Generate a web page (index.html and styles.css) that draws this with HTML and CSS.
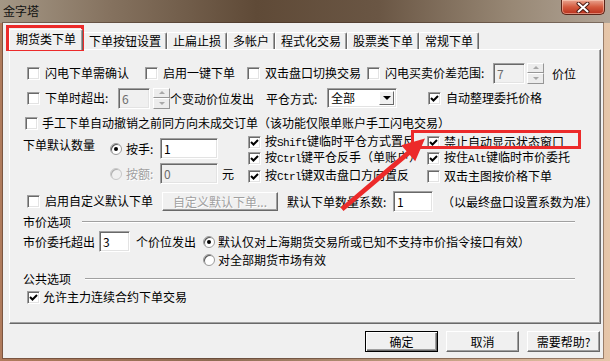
FILE: index.html
```html
<!DOCTYPE html>
<html lang="zh-CN">
<head>
    <meta charset="UTF-8">
    <title>金字塔</title>
    <link rel="stylesheet" href="styles.css">
</head>
<body>
<div class="window">
    <div class="titlebar">
        <span class="title">金字塔</span>
        <span class="close">
            <svg width="14" height="11" viewBox="0 0 14 11"><path d="M2.5 1.5 L11.5 9.5 M11.5 1.5 L2.5 9.5" stroke="#4a1a12" stroke-width="4" stroke-linecap="round"/><path d="M2.5 1.5 L11.5 9.5 M11.5 1.5 L2.5 9.5" stroke="#fff" stroke-width="2" stroke-linecap="round"/></svg>
        </span>
    </div>

    <div class="client">
        <div class="tabs">
            <span class="tab active">期货类下单</span>
            <span class="tab">下单按钮设置</span>
            <span class="tab">止扁止损</span>
            <span class="tab">多帐户</span>
            <span class="tab">程式化交易</span>
            <span class="tab">股票类下单</span>
            <span class="tab">常规下单</span>
        </div>

        <div class="panel">
            <div class="row r1">
                <label class="opt w118"><span class="cb"></span>闪电下单需确认</label>
                <label class="opt w102"><span class="cb"></span>启用一键下单</label>
                <label class="opt w120"><span class="cb"></span>双击盘口切换交易</label>
                <label class="opt w126"><span class="cb"></span>闪电买卖价差范围:</label>
                <span class="field off w32">7</span>
                <span class="spin sp-gap"><span class="up"></span><span class="dn"></span></span>
                <span class="unit">价位</span>
            </div>

            <div class="row r2">
                <label class="opt w91"><span class="cb"></span>下单时超出:</label>
                <span class="field off w32">6</span>
                <span class="spin sp-gap3"><span class="up"></span><span class="dn"></span></span>
                <span class="w96">个变动价位发出</span>
                <span class="w61">平仓方式:</span>
                <span class="select">
                    <span class="val">全部</span>
                    <span class="drop"></span>
                </span>
                <label class="opt ml31"><span class="cb"><svg class="tick" viewBox="0 0 9 9"><polyline points="1,4 3.5,6.5 8,2"/></svg></span>自动整理委托价格</label>
            </div>

            <div class="row r3">
                <label class="opt gap4"><span class="cb"></span>手工下单自动撤销之前同方向未成交订单（该功能仅限单账户手工闪电交易）</label>
            </div>

            <div class="qty">
                <div class="qty-label">下单默认数量</div>
                <div class="qty-radios">
                    <div class="qrow first">
                        <span class="rd on"></span>
                        <span class="qname">按手:</span>
                        <span class="field w58">1</span>
                    </div>
                    <div class="qrow second">
                        <span class="rd off"></span>
                        <span class="qname dim">按额:</span>
                        <span class="field off w58">0</span>
                        <span class="yuan">元</span>
                    </div>
                </div>
                <div class="checks mid">
                    <label class="opt c1"><span class="cb"><svg class="tick" viewBox="0 0 9 9"><polyline points="1,4 3.5,6.5 8,2"/></svg></span><span>按<span class="en">Shift</span>键临时平仓方式置反</span></label>
                    <label class="opt c2"><span class="cb"><svg class="tick" viewBox="0 0 9 9"><polyline points="1,4 3.5,6.5 8,2"/></svg></span><span>按<span class="en">Ctrl</span>键平仓反手（单账户）</span></label>
                    <label class="opt c3"><span class="cb"><svg class="tick" viewBox="0 0 9 9"><polyline points="1,4 3.5,6.5 8,2"/></svg></span><span>按<span class="en">Ctrl</span>键双击盘口方向置反</span></label>
                </div>
                <div class="checks right">
                    <label class="opt c1"><span class="cb"><svg class="tick" viewBox="0 0 9 9"><polyline points="1,4 3.5,6.5 8,2"/></svg></span>禁止自动显示状态窗口</label>
                    <label class="opt c2"><span class="cb"><svg class="tick" viewBox="0 0 9 9"><polyline points="1,4 3.5,6.5 8,2"/></svg></span><span>按住<span class="en">Alt</span>键临时市价委托</span></label>
                    <label class="opt c3"><span class="cb"></span>双击主图按价格下单</label>
                </div>
            </div>

            <div class="row r7">
                <label class="opt w135"><span class="cb"></span>启用自定义默认下单</label>
                <span class="btn disabled">自定义默认下单...</span>
                <span class="w106">默认下单数量系数:</span>
                <span class="field w40">1</span>
                <span class="note">（以最终盘口设置系数为准）</span>
            </div>

            <div class="grp g1">
                <span>市价选项</span>
                <span class="line"></span>
            </div>

            <div class="row r9">
                <span>市价委托超出</span>
                <span class="field w31">3</span>
                <span class="after">个价位发出</span>
                <span class="rd on"></span>
                <span class="rtext">默认仅对上海期货交易所或已知不支持市价指令接口有效）</span>
            </div>

            <div class="row r10">
                <span class="rd"></span>
                <span class="rtext">对全部期货市场有效</span>
            </div>

            <div class="grp g2">
                <span>公共选项</span>
                <span class="line"></span>
            </div>

            <div class="row r12">
                <label class="opt gap3"><span class="cb"><svg class="tick" viewBox="0 0 9 9"><polyline points="1,4 3.5,6.5 8,2"/></svg></span>允许主力连续合约下单交易</label>
            </div>
        </div>

        <div class="actions">
            <span class="btn default">确定</span>
            <span class="btn">取消</span>
            <span class="btn">需要帮助?</span>
        </div>
    </div>

    <!-- annotations drawn over the dialog -->
    <div class="mark mark-tab"></div>
    <div class="mark mark-opt"></div>
    <svg class="arrow" width="610" height="361" viewBox="0 0 610 361">
        <polygon points="340.5,207.5 406.6,151.3 401.2,145.2 425,138.5 415.2,161.2 409.8,155.1 343.5,211" fill="#ec2a2a"/>
    </svg>
</div>
</body>
</html>
```

FILE: styles.css
```css
* {
    box-sizing: border-box;
}
body {
    margin: 0;
    font-family: "Noto Sans CJK SC", "Noto Sans", sans-serif;
    font-size: 12px;
    color: #000;
}
.window {
    position: relative;
    width: 610px;
    height: 361px;
    overflow: hidden;
    background: linear-gradient(to right, #b07b5c 0%, #8f6c53 35%, #c9a487 75%, #e6c6a9 100%);
}
.titlebar {
    height: 23px;
    display: flex;
    align-items: flex-start;
    background: linear-gradient(to right, #a49785 0%, #85725f 18%, #5f4a37 42%, #6a5644 62%, #988875 84%, #b2a597 100%);
}
.title {
    padding: 4px 0 0 3px;
    line-height: 14px;
    color: #111;
}
.close {
    margin-left: auto;
    margin-right: 5px;
    width: 44px;
    height: 15px;
    display: flex;
    align-items: center;
    justify-content: center;
    border: 1px solid #5a2418;
    border-top: none;
    border-radius: 0 0 5px 5px;
    background: linear-gradient(#e9a48f, #d45a3e 50%, #b8301c);
    box-shadow: inset 0 0 0 1px rgba(255, 220, 200, 0.5);
}
.client {
    margin-left: 3px;
    width: 600px;
    height: 335px;
    padding-top: 6px;
    background: #f0f0f0;
    box-shadow: 0 0 0 1px rgba(60, 40, 30, 0.45);
}

/* tabs */
.tabs {
    display: flex;
    align-items: flex-end;
    height: 20px;
    margin-left: 6px;
}
.tab {
    height: 17px;
    padding: 0 5px;
    line-height: 15px;
    border: 1px solid #fff;
    border-right-color: #696969;
    border-bottom: none;
    border-radius: 2px 2px 0 0;
    box-shadow: inset -1px 0 #a0a0a0;
    white-space: nowrap;
}
.tab.active {
    position: relative;
    z-index: 1;
    height: 21px;
    margin-bottom: -1px;
    padding: 0 6px;
    line-height: 17px;
    background: #f0f0f0;
}
.panel {
    margin-left: 6px;
    width: 592px;
    height: 275px;
    padding-left: 13px;
    border: 1px solid;
    border-color: #fff #696969 #696969 #fff;
    box-shadow: inset -1px -1px #a0a0a0;
}

/* generic controls */
.row {
    display: flex;
    align-items: center;
    white-space: nowrap;
}
.opt {
    display: flex;
    align-items: center;
    gap: 5px;
    white-space: nowrap;
    line-height: 14px;
}
.gap4 {
    gap: 4px;
}
.gap3 {
    gap: 3px;
}
.cb {
    flex: none;
    width: 13px;
    height: 13px;
    display: flex;
    align-items: center;
    justify-content: center;
    background: #fff;
    border: 1px solid;
    border-color: #a0a0a0 #fff #fff #a0a0a0;
    box-shadow: inset 1px 1px #696969, inset -1px -1px #e3e3e3;
}
.tick {
    width: 9px;
    height: 9px;
    fill: none;
    stroke: #000;
    stroke-width: 2;
}
.rd {
    flex: none;
    width: 12px;
    height: 12px;
    border-radius: 50%;
    background: #fff;
    border: 1px solid #9a9a9a;
    box-shadow: inset 1px 1px #5a5a5a;
    display: flex;
    align-items: center;
    justify-content: center;
}
.rd.on::after {
    content: "";
    width: 4px;
    height: 4px;
    border-radius: 50%;
    background: #000;
}
.rd.off {
    background: #f0f0f0;
    border-color: #c8c8c8;
    box-shadow: inset 1px 1px #b0b0b0;
}
.field {
    flex: none;
    height: 21px;
    padding: 0 3px;
    line-height: 19px;
    background: #fff;
    border: 1px solid;
    border-color: #a0a0a0 #fff #fff #a0a0a0;
    box-shadow: inset 1px 1px #696969, inset -1px -1px #e3e3e3;
}
.field.off {
    background: #f0f0f0;
    color: #6d6d6d;
}
.spin {
    flex: none;
    width: 17px;
    height: 21px;
    display: flex;
    flex-direction: column;
}
.spin span {
    flex: 1;
    display: flex;
    align-items: center;
    justify-content: center;
    border: 1px solid;
    border-color: #fff #969696 #969696 #fff;
    background: #ececec;
}
.spin .up::before {
    content: "";
    border-left: 3px solid transparent;
    border-right: 3px solid transparent;
    border-bottom: 3px solid #a8a8a8;
}
.spin .dn::before {
    content: "";
    border-left: 3px solid transparent;
    border-right: 3px solid transparent;
    border-top: 3px solid #a8a8a8;
}
.select {
    flex: none;
    width: 70px;
    height: 20px;
    display: flex;
    padding: 2px;
    background: #fff;
    border: 1px solid;
    border-color: #a0a0a0 #fff #fff #a0a0a0;
    box-shadow: inset 1px 1px #696969, inset -1px -1px #e3e3e3;
}
.select .val {
    flex: 1;
    padding-left: 1px;
    line-height: 14px;
}
.select .drop {
    width: 15px;
    display: flex;
    align-items: center;
    justify-content: center;
    background: #f0f0f0;
    border: 1px solid;
    border-color: #fff #696969 #696969 #fff;
}
.select .drop::before {
    content: "";
    border-left: 4px solid transparent;
    border-right: 4px solid transparent;
    border-top: 4px solid #000;
}
.btn {
    flex: none;
    width: 73px;
    height: 21px;
    text-align: center;
    line-height: 19px;
    background: #f0f0f0;
    border: 1px solid;
    border-color: #fff #696969 #696969 #fff;
    box-shadow: inset -1px -1px #a0a0a0;
}
.btn.default {
    border: 1px solid #000;
    box-shadow: inset 1px 1px #fff, inset -1px -1px #696969, inset -2px -2px #a0a0a0;
}
.btn.disabled {
    width: 116px;
    height: 19px;
    line-height: 17px;
    color: #a0a0a0;
    text-shadow: 1px 1px #fff;
}
.en {
    font-family: "Liberation Mono", monospace;
    font-size: 11px;
    letter-spacing: -0.6px;
}
.dim {
    color: #a0a0a0;
    text-shadow: 1px 1px #fff;
}

/* widths for the fixed dialog grid */
.w31 { width: 31px; }
.w32 { width: 32px; }
.w40 { width: 40px; }
.w58 { width: 58px; }
.w61 { width: 61px; flex: none; }
.w91 { width: 91px; flex: none; }
.w96 { width: 96px; flex: none; }
.w102 { width: 102px; flex: none; }
.w106 { width: 106px; flex: none; margin-left: 9px; }
.w118 { width: 118px; flex: none; }
.w120 { width: 120px; flex: none; }
.w126 { width: 126px; flex: none; }
.w135 { width: 135px; flex: none; }
.ml31 { margin-left: 31px; }
.sp-gap { margin-left: 2px; }
.sp-gap3 { margin-left: 3px; }
.unit { margin-left: 8px; }

/* rows, top to bottom */
.r1 {
    margin-top: 13px;
    height: 20px;
    padding-left: 4px;
}
.r2 {
    margin-top: 4px;
    height: 22px;
    padding-left: 4px;
}
.r3 {
    margin-top: 5px;
    height: 18px;
    padding-left: 2px;
}
.qty {
    display: flex;
    margin-top: 2px;
    height: 52px;
    white-space: nowrap;
}
.qty-label {
    width: 87px;
    padding-top: 4px;
    line-height: 14px;
}
.qty-radios {
    width: 138px;
}
.qrow {
    display: flex;
    align-items: center;
}
.qrow.first {
    margin-top: 4px;
    height: 21px;
}
.qrow.second {
    margin-top: 4px;
    height: 21px;
}
.qname {
    width: 34px;
    margin-left: 4px;
}
.yuan {
    margin-left: 4px;
}
.checks {
    display: flex;
    flex-direction: column;
}
.checks.mid {
    width: 179px;
}
.checks .c1,
.checks .c2 {
    height: 16px;
    gap: 4px;
}
.checks .c3 {
    height: 20px;
    gap: 4px;
}
.r7 {
    margin-top: 4px;
    height: 22px;
    padding-left: 4px;
}
.note {
    margin-left: 9px;
}
.grp {
    display: flex;
    align-items: center;
    width: 552px;
    height: 14px;
    line-height: 14px;
}
.grp .line {
    flex: 1;
    margin-left: 11px;
    border-top: 1px solid #a0a0a0;
    border-bottom: 1px solid #fff;
}
.g1 {
    margin-top: 3px;
}
.g2 {
    margin-top: 6px;
}
.g2 .line {
    margin-left: 14px;
}
.r9 {
    margin-top: 2px;
    height: 21px;
}
.r9 .field {
    margin-left: 4px;
}
.after {
    margin-left: 6px;
    margin-right: 7px;
}
.rtext {
    margin-left: 3px;
}
.r10 {
    margin-top: 1px;
    height: 13px;
    padding-left: 180px;
}
.r12 {
    margin-top: 4px;
    height: 14px;
    padding-left: 4px;
}
.actions {
    display: flex;
    justify-content: flex-end;
    gap: 8px;
    margin-top: 7px;
    padding-right: 3px;
}

/* red annotations */
.mark {
    position: absolute;
    border: 3px solid #ec2a2a;
}
.mark-tab {
    left: 6px;
    top: 25px;
    width: 78px;
    height: 26px;
}
.mark-opt {
    left: 411px;
    top: 130px;
    width: 170px;
    height: 19px;
}
.arrow {
    position: absolute;
    left: 0;
    top: 0;
    pointer-events: none;
}
```
